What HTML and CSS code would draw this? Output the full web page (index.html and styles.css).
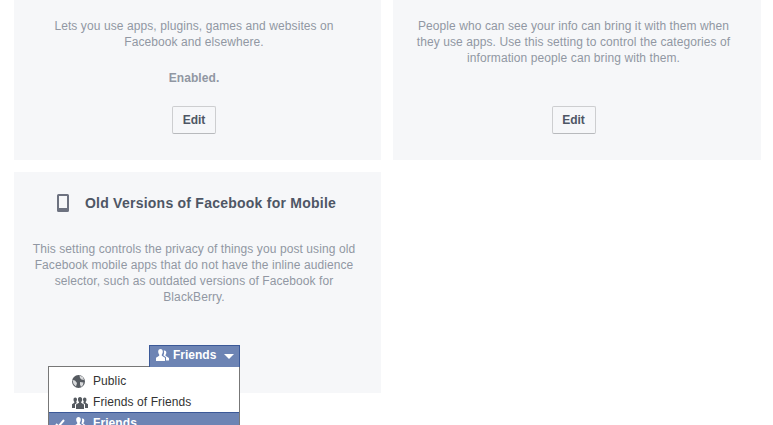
FILE: index.html
```html
<!DOCTYPE html>
<html lang="en">
<head>
  <meta charset="UTF-8">
  <title>Apps Settings</title>
  <link rel="stylesheet" href="styles.css">
</head>
<body>
  <div class="settings-grid">
    <div class="card card-top">
      <p class="desc">Lets you use apps, plugins, games and websites on Facebook and elsewhere.</p>
      <p class="status">Enabled.</p>
      <div class="actions"><button class="edit-btn" type="button">Edit</button></div>
    </div>
    <div class="card card-top">
      <p class="desc">People who can see your info can bring it with them when they use apps. Use this setting to control the categories of information people can bring with them.</p>
      <div class="actions actions-low"><button class="edit-btn" type="button">Edit</button></div>
    </div>
    <div class="card card-mobile">
      <h3 class="card-title">
        <svg class="phone-icon" width="12" height="18" viewBox="0 0 12 18"><path fill="#6d7280" fill-rule="evenodd" d="M1.500 0h9A1.500 1.500 0 0 1 12 1.500v15a1.500 1.500 0 0 1-1.500 1.500h-9A1.500 1.500 0 0 1 0 16.500v-15A1.500 1.500 0 0 1 1.500 0zM2 2v12h8V2z"/></svg>
        Old Versions of Facebook for Mobile
      </h3>
      <p class="desc">This setting controls the privacy of things you post using old Facebook mobile apps that do not have the inline audience selector, such as outdated versions of Facebook for BlackBerry.</p>
      <div class="audience">
        <button class="audience-btn" type="button">
          <svg width="13" height="12" viewBox="0 0 13 12"><path fill="#fff" d="M4.500 0C6 0 6.900 1.200 6.800 2.800c0 1.200-.5 2.200-1 2.700v1.200L9 8.800V12H0V8.800l3.200-2.100V5.500c-.5-.5-1-1.500-1-2.700C2.100 1.200 3 0 4.500 0zM8.500 1.500c1.200 0 1.900 1 1.800 2.200 0 .9-.4 1.700-.8 2.100v.9L13 9v2.500h-3V8.300L7.500 6.600V6c.5-.8.700-2 .6-3.100 0-.5-.2-1-.4-1.300.2-.1.500-.1.800-.1z"/></svg>
          Friends
          <span class="caret"></span>
        </button>
        <ul class="audience-menu">
          <li class="menu-item">
            <svg class="menu-icon" width="13" height="13" viewBox="0 0 13 13"><circle cx="6.500" cy="6.500" r="6.500" fill="#555a60"/><path fill="#d8d9db" d="M7.500.5 11 2l1 3-2.500-.5L8 3zM8 7l3.500.5-.5 2.500-2 2-1-2.500zM.5 5 3 5.500 5 8l-1 3.500L1.500 9z"/></svg>
            Public
          </li>
          <li class="menu-item">
            <svg class="menu-icon" width="16" height="13" viewBox="0 0 16 13"><path fill="#555a60" d="M8 1c1.400 0 2.200 1 2.200 2.500 0 1-.5 2-1 2.400v.8L12 8.500V13H4V8.500l3-1.800v-.8c-.6-.4-1-1.400-1-2.400C5.800 2 6.600 1 8 1zM3.300 1.500c1 0 1.700.8 1.700 2 0 .8-.3 1.500-.7 2v.7L5 7 3 8.200V12H0V8.200l2.300-1.500v-.9c-.5-.4-.8-1.200-.8-2 0-1.400.7-2.300 1.800-2.300zm9.400 0c1.100 0 1.800.9 1.800 2.300 0 .8-.3 1.600-.8 2v.9L16 8.200V12h-3V8.200L11 7l.7-.8v-.7c-.4-.5-.7-1.200-.7-2 0-1.200.7-2 1.700-2z"/></svg>
            Friends of Friends
          </li>
          <li class="menu-item menu-item-selected">
            <svg class="check" width="10" height="9" viewBox="0 0 10 9"><path fill="none" stroke="#fff" stroke-width="2" d="M1 5l2.500 2.500L9 1"/></svg>
            <svg class="menu-icon" width="13" height="12" viewBox="0 0 13 12"><path fill="#fff" d="M4.500 0C6 0 6.900 1.200 6.800 2.800c0 1.200-.5 2.200-1 2.700v1.200L9 8.800V12H0V8.800l3.200-2.100V5.500c-.5-.5-1-1.500-1-2.700C2.100 1.200 3 0 4.500 0zM8.500 1.500c1.200 0 1.900 1 1.800 2.200 0 .9-.4 1.700-.8 2.100v.9L13 9v2.500h-3V8.300L7.500 6.600V6c.5-.8.700-2 .6-3.100 0-.5-.2-1-.4-1.300.2-.1.500-.1.800-.1z"/></svg>
            Friends
          </li>
        </ul>
      </div>
    </div>
  </div>
</body>
</html>
```

FILE: styles.css
```css
html, body {
  height: 425px;
  overflow: hidden;
}
body {
  margin: 0;
  background: #fff;
  font-family: "Liberation Sans", Arial, sans-serif;
  font-size: 12px;
  line-height: 16px;
  letter-spacing: 0.09px;
  color: #9197a3;
}
.settings-grid {
  display: grid;
  grid-template-columns: 367px 368px;
  column-gap: 12px;
  row-gap: 12px;
  padding-left: 14px;
}
.card {
  background: #f6f7f9;
  box-sizing: border-box;
  text-align: center;
  padding: 18px 23px 0 16px;
}
.card-top {
  height: 160px;
}
.card-mobile {
  height: 221px;
  padding-top: 22px;
}
.desc {
  margin: 0;
}
.status {
  margin: 20px 0 0;
  font-weight: bold;
}
.actions {
  margin-top: 20px;
}
.actions-low {
  margin-top: 40px;
}
.edit-btn {
  box-sizing: border-box;
  width: 44px;
  height: 28px;
  padding: 0;
  background: #f6f7f9;
  border: 1px solid #cdced0;
  border-bottom-color: #b8babd;
  border-radius: 2px;
  font-family: inherit;
  font-size: 12px;
  font-weight: bold;
  color: #4e5665;
}
.card-title {
  display: flex;
  justify-content: center;
  align-items: center;
  gap: 16px;
  margin: 0 0 29px;
  padding-left: 5px;
  height: 18px;
  font-size: 14px;
  line-height: 18px;
  letter-spacing: 0.24px;
  color: #4e5665;
}
.audience {
  position: relative;
  height: 22px;
  margin-top: 40px;
  text-align: left;
}
.audience-btn {
  position: absolute;
  left: 119px;
  top: 0;
  z-index: 2;
  box-sizing: border-box;
  display: flex;
  align-items: center;
  gap: 4px;
  width: 91px;
  height: 22px;
  padding: 0 0 3px 6px;
  background: #6d84b4;
  border: 1px solid #3b5998;
  border-bottom: 0;
  font-family: inherit;
  font-size: 12px;
  font-weight: bold;
  letter-spacing: 0;
  color: #fff;
}
.caret {
  width: 0;
  height: 0;
  margin-left: 4px;
  margin-top: 3px;
  border-style: solid;
  border-width: 5px 5px 0;
  border-color: #fff transparent transparent;
}
.audience-menu {
  position: absolute;
  left: 18px;
  top: 21px;
  z-index: 1;
  box-sizing: border-box;
  width: 192px;
  margin: 0;
  padding: 4px 0 0;
  list-style: none;
  background: #fff;
  border: 1px solid #777;
}
.menu-item {
  position: relative;
  height: 21px;
  padding-left: 44px;
  line-height: 21px;
  color: #333;
}
.menu-icon {
  position: absolute;
  left: 23px;
  top: 4px;
}
.menu-item-selected {
  margin-top: -1px;
  background: #6d84b4;
  color: #fff;
  font-weight: bold;
  border-top: 1px solid #3b5998;
}
.menu-item-selected .menu-icon {
  left: 25px;
}
.check {
  position: absolute;
  left: 6px;
  top: 6px;
}
```
